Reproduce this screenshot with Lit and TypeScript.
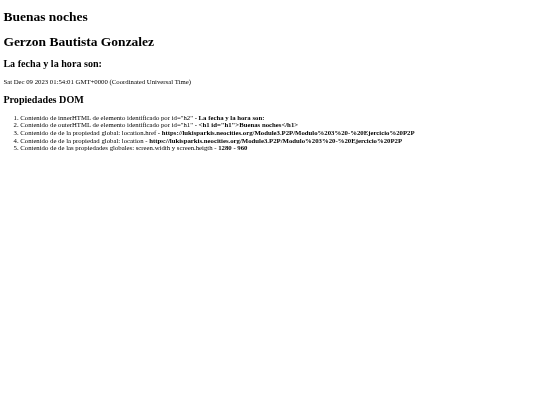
import { LitElement, html, css } from "lit";
import { customElement } from "lit/decorators.js";

const URL_TEXT = "https://lukisparkis.neocities.org/Module3.P2P/Modulo%203%20-%20Ejercicio%20P2P";

@customElement("app-root")
export class AppRoot extends LitElement {
  static styles = css`
    :host {
      display: block;
      zoom: 0.421875;
      margin: 8px;
      font-family: "Liberation Serif", "Times New Roman", serif;
      font-size: 16px;
      color: #000;
      filter: blur(0.6px);
    }
    h1 { font-size: 32px; line-height: 37px; font-weight: 700; margin: 21.44px 0; }
    h2 { font-size: 24px; line-height: 27px; font-weight: 700; margin: 19.92px 0; }
    p { margin: 16px 0; line-height: 18px; }
    ol { margin: 16px 0; padding-left: 40px; }
    li { line-height: 18px; }
    b { font-weight: 700; }
  `;
  render() {
    return html`
      <h1>Buenas noches</h1>
      <h1>Gerzon Bautista Gonzalez</h1>
      <h2>La fecha y la hora son:</h2>
      <p>Sat Dec 09 2023 01:54:01 GMT+0000 (Coordinated Universal Time)</p>
      <h2>Propiedades DOM</h2>
      <ol>
        <li>Contenido de innerHTML de elemento identificado por id="h2" - <b>La fecha y la hora son:</b></li>
        <li>Contenido de outerHTML de elemento identificado por id="h1" - <b>&lt;h1 id="h1"&gt;Buenas noches&lt;/h1&gt;</b></li>
        <li>Contenido de de la propiedad global: location.href - <b>${URL_TEXT}</b></li>
        <li>Contenido de de la propiedad global: location - <b>${URL_TEXT}</b></li>
        <li>Contenido de de las propiedades globales: screen.width y screen.heigth - <b>1280 - 960</b></li>
      </ol>
    `;
  }
}
